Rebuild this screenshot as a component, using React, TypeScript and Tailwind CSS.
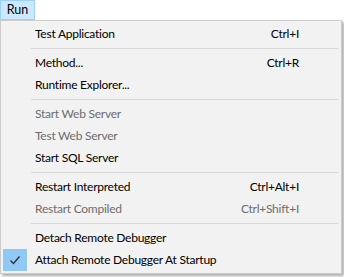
import React from "react";

type Item =
  | { sep: true }
  | { sep?: false; label: string; shortcut?: string; disabled?: boolean; checked?: boolean };

const items: Item[] = [
  { label: "Test Application", shortcut: "Ctrl+I" },
  { sep: true },
  { label: "Method...", shortcut: "Ctrl+R" },
  { label: "Runtime Explorer..." },
  { sep: true },
  { label: "Start Web Server", disabled: true },
  { label: "Test Web Server", disabled: true },
  { label: "Start SQL Server" },
  { sep: true },
  { label: "Restart Interpreted", shortcut: "Ctrl+Alt+I" },
  { label: "Restart Compiled", shortcut: "Ctrl+Shift+I", disabled: true },
  { sep: true },
  { label: "Detach Remote Debugger" },
  { label: "Attach Remote Debugger At Startup", checked: true },
];

export default function App() {
  return (
    <div className="w-[344px] h-[277px] bg-white overflow-hidden text-[12px] tracking-[-0.25px] leading-none text-black font-['Lato','Noto_Sans',sans-serif]">
      <div className="h-[20px] flex">
        <div className="w-[35px] h-[20px] bg-[#cce8ff] border border-[#99d1ff] flex items-center justify-center text-[12.5px] tracking-normal">
          Run
        </div>
      </div>
      <div className="w-[342px] bg-[#f2f2f2] border border-[#cccccc] py-[2px] px-[2px] shadow-[2px_2px_3px_rgba(0,0,0,0.35)]">
        {items.map((it, i) =>
          it.sep ? (
            <div key={i} className="h-[7px] flex items-center pl-[28px] pr-[1px]">
              <div className="h-px w-full bg-[#d7d7d7]" />
            </div>
          ) : (
            <div
              key={i}
              className={`h-[22px] flex items-center ${it.disabled ? "text-[#6d6d6d]" : "text-black"}`}
            >
              <div className="w-[32px] h-[22px] flex items-center">
                {it.checked && (
                  <div className="w-[24px] h-[22px] bg-[#90c8f6] flex items-center justify-center">
                    <svg width="12" height="10" viewBox="0 0 12 10">
                      <path d="M1.5 5.5 L4.5 8.5 L10.5 1.5" fill="none" stroke="#333" strokeWidth="1.4" />
                    </svg>
                  </div>
                )}
              </div>
              <div className="flex-1 whitespace-nowrap">{it.label}</div>
              {it.shortcut && <div className="pr-[40px] whitespace-nowrap">{it.shortcut}</div>}
            </div>
          )
        )}
      </div>
    </div>
  );
}
